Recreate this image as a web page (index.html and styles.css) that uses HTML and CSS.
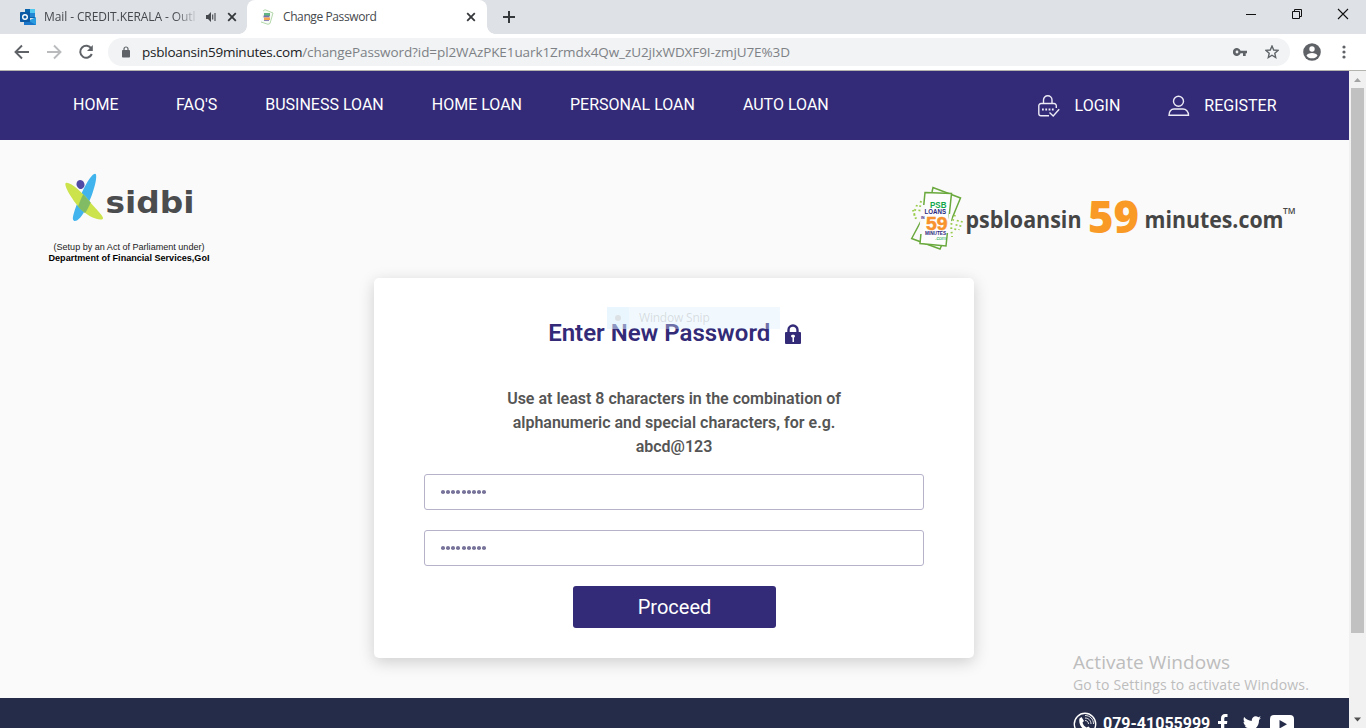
FILE: index.html
```html
<!DOCTYPE html>
<html lang="en">
<head>
<meta charset="utf-8">
<title>Change Password</title>
<link rel="stylesheet" href="styles.css">
</head>
<body>
<div class="browser">
  <div class="tabstrip">
    <div class="tab tab-mail">
      <svg class="favicon" width="16" height="16" viewBox="0 0 16 16"><path d="M5 0h10v9H5z" fill="#0a64ad"/><path d="M10 0h5v4h-5z" fill="#50c8f0"/><path d="M5 4h5v4H5z" fill="#1d4f91"/><path d="M10 4h5v4h-5z" fill="#2386d2"/><path d="M4 8l6 3 6-3v8H4z" fill="#2b9be0"/><path d="M4 9l12 7H4z" fill="#1976c8"/><rect y="3" width="10" height="10" rx=".7" fill="#0c59a4"/><circle cx="5" cy="8" r="2.3" fill="none" stroke="#fff" stroke-width="1.4"/></svg>
      <span class="tab-title mail-title">Mail - CREDIT.KERALA - Outl</span>
      <svg class="speaker" width="11" height="10" viewBox="0 0 11 10"><path d="M0 3h2l3-3v10L2 7H0z" fill="#45494d"/><path d="M6.700 2.500v5M9 1v8" stroke="#45494d" stroke-width="1.1"/></svg>
      <svg class="close" width="10" height="10" viewBox="0 0 10 10"><path d="M1.200 1.200l7.600 7.600M8.800 1.200l-7.600 7.600"/></svg>
    </div>
    <div class="tab tab-active">
      <svg class="favicon" width="16" height="16" viewBox="0 0 16 16"><path d="M4 2l2-1.300L14 4l-3 10.500-2 .8L2 13" fill="#f7fbf5" stroke="#b4d9ab"/><path d="M5 4h6v3H5z" fill="#60b580"/><path d="M4.500 6.500h6v2h-6z" fill="#7771b0"/><path d="M5 8.500h6V11H5z" fill="#f6a64e"/><path d="M5 11h5v1H5z" fill="#8a84b8"/></svg>
      <span class="tab-title page-title">Change Password</span>
      <svg class="close" width="10" height="10" viewBox="0 0 10 10"><path d="M1.200 1.200l7.600 7.600M8.800 1.200l-7.600 7.600"/></svg>
    </div>
    <svg class="newtab" width="12" height="12" viewBox="0 0 12 12"><path d="M6 0v12M0 6h12" stroke="#35383b" stroke-width="2"/></svg>
    <div class="window-controls">
      <svg width="10" height="12" viewBox="0 0 10 12"><path d="M0 6.500h10" stroke="#111"/></svg>
      <svg width="11" height="12" viewBox="0 0 11 12" fill="none" stroke="#111"><path d="M1.500 3.500h7v7h-7zM3.500 3.500v-2h7v7h-2"/></svg>
      <svg width="12" height="12" viewBox="0 0 12 12" stroke="#111" stroke-width="1.100"><path d="M1 1l10 10M11 1L1 11"/></svg>
    </div>
  </div>

  <div class="toolbar">
    <div class="nav-buttons">
      <svg width="16" height="16" viewBox="0 0 16 16" fill="none" stroke="#5f6368" stroke-width="1.900"><path d="M15 8H2M8 1.500L1.500 8 8 14.500"/></svg>
      <svg width="16" height="16" viewBox="0 0 16 16" fill="none" stroke="#b9bbbd" stroke-width="1.900"><path d="M1 8h13M8 1.500L14.500 8 8 14.500"/></svg>
      <svg width="16" height="16" viewBox="0 0 16 16" fill="none" stroke="#5f6368" stroke-width="2"><path d="M13.300 4.500A6 6 0 1 0 13.800 10"/><path d="M14.800 1v6H9z" fill="#5f6368" stroke="none"/></svg>
    </div>
    <div class="omnibox">
      <svg class="site-lock" width="8" height="12" viewBox="0 0 8 12"><path d="M2 5V3a2 2 0 0 1 4 0v2" fill="none" stroke="#5f6368" stroke-width="1.200"/><rect y="4" width="8" height="7.500" rx=".8" fill="#5f6368"/></svg>
      <span class="url"><span class="host">psbloansin59minutes.com</span><span class="path">/changePassword?id=pl2WAzPKE1uark1Zrmdx4Qw_zU2jIxWDXF9I-zmjU7E%3D</span></span>
      <svg class="key" width="14" height="8" viewBox="0 0 14 8"><path fill="#5f6368" fill-rule="evenodd" d="M7.600 2.700A4 4 0 1 0 7.600 5.300H10V8h2.700V5.300H14V2.700zM4 5.400a1.400 1.400 0 1 1 0-2.800 1.400 1.400 0 0 1 0 2.800z"/></svg>
      <svg class="star" width="14" height="14" viewBox="0 0 14 14"><path d="M7 1l1.700 4 4.300.4-3.200 2.900.9 4.200L7 10.200l-3.700 2.300.9-4.200L1 5.400 5.300 5z" fill="none" stroke="#5f6368" stroke-width="1.400"/></svg>
    </div>
    <svg class="profile" width="18" height="18" viewBox="0 0 18 18"><circle cx="9" cy="9" r="8.800" fill="#5f6368"/><circle cx="9" cy="6" r="2.700" fill="#fff"/><path d="M3.500 12.500c1-3.500 10-3.500 11 0-2 3.800-9 3.800-11 0z" fill="#fff"/></svg>
    <svg class="dots" width="4" height="14" viewBox="0 0 4 14" fill="#5f6368"><circle cx="2" cy="2" r="1.600"/><circle cx="2" cy="7" r="1.600"/><circle cx="2" cy="12" r="1.600"/></svg>
  </div>

  <div class="viewport">
    <div class="page">
      <nav class="site-nav">
        <div class="links">
          <a class="home">HOME</a><a>FAQ'S</a><a>BUSINESS LOAN</a><a>HOME LOAN</a><a>PERSONAL LOAN</a><a>AUTO LOAN</a>
        </div>
        <div class="account">
          <svg width="22" height="22" viewBox="0 0 22 22" fill="none" stroke="#eceaf5" stroke-width="1.400"><path d="M5.500 8.500V5a4 4 0 0 1 8.500 0v3.500M18.300 13v-2.300a2.200 2.200 0 0 0-2.200-2.200H3A2.200 2.200 0 0 0 .8 10.700v7.800A2.200 2.200 0 0 0 3 20.700h8M11.500 17.500l3.700 3.500 6-6.800"/><path d="M4 14.500h12" stroke-width="1.800" stroke-dasharray="1.800 1.500"/></svg>
          <a class="login">LOGIN</a>
          <svg width="22" height="22" viewBox="0 0 22 22" fill="none" stroke="#eceaf5" stroke-width="1.400"><circle cx="10.500" cy="6.200" r="5"/><path d="M1 20.300c0-3.800 2-6.300 5-6.300h9c3 0 5.500 2.500 5.500 6.300z"/></svg>
          <a>REGISTER</a>
        </div>
      </nav>

      <header class="brands">
        <svg class="sidbi" width="170" height="98" viewBox="0 0 170 98">
          <path d="M51 4.500C52.500 10 46 31 38.500 43c-4 7-9 10-10.500 6.500C27 44 38 18 44 9.500c2.500-3.500 6-7.500 7-5z" fill="#41b4ee"/>
          <path d="M20.800 13c4-1.500 15 8 23 17.500 7 8.500 16 16.500 14 18.500-4 2.500-17-3.500-24.500-12.500-6-7-15-21.500-12.500-23.500z" fill="#cce34b"/>
          <path d="M38.200 24.200l7.500 8.300c-1.900 4.200-3.500 7.500-5.700 10.500-2.700-1.800-5-4.200-7-6.800 1.500-4 3.200-8 5.200-12z" fill="#81bc65"/>
          <ellipse cx="35.500" cy="14.500" rx="4" ry="4.500" transform="rotate(-20 35.500 14.500)" fill="#504aa5"/>
          <text x="60.500" y="42.500" class="sidbi-name" textLength="89" lengthAdjust="spacingAndGlyphs">sidbi</text>
          <text x="8.500" y="80" class="sidbi-note" textLength="151" lengthAdjust="spacingAndGlyphs">(Setup by an Act of Parliament under)</text>
          <text x="3.500" y="91" class="sidbi-note strong" textLength="161" lengthAdjust="spacingAndGlyphs">Department of Financial Services,GoI</text>
        </svg>
        <svg class="psb" width="390" height="70" viewBox="0 0 390 70">
          <g fill="none" stroke="#6aa93d" stroke-width="1.500">
            <path d="M11 36L1.700 53.500 30 64l1.500-3.500"/><path d="M22 7l1-4.500L50.500 13 41 36"/>
          </g>
          <path d="M15 7.500l26.500 1-5.500 52.500-26-2.500z" fill="#fdfdfd" stroke="#6aa93d" stroke-width="1.500"/>
          <path d="M11.500 20h4l-3 29h-3.500zM39 29h3l-2.500 19h-4z" fill="#fafafa"/>
          <g stroke="#99cc4b" stroke-width="2" stroke-dasharray="1.600 2.800" fill="none"><path d="M11 16l-2 12M7 20l-3 8 2 6M3 25l2 7M45 30l-4 10 1 12M48 35l-3 10M52 36l-3 9"/></g>
          <text x="20" y="23.200" class="mark green" font-size="8.500" textLength="16.500" lengthAdjust="spacingAndGlyphs">PSB</text>
          <text x="14.500" y="29.200" class="mark navy" font-size="6.500" textLength="21.500" lengthAdjust="spacingAndGlyphs">LOANS</text>
          <text x="11" y="33.500" class="mark navy" font-size="3.500">IN</text>
          <text x="16" y="45" class="mark orange" font-size="17.500" textLength="21.500" lengthAdjust="spacingAndGlyphs">59</text>
          <text x="15" y="49.500" class="mark navy" font-size="4.800" textLength="21" lengthAdjust="spacingAndGlyphs">MINUTES</text>
          <text x="25" y="54.500" class="mark light green" font-size="6" textLength="11" lengthAdjust="spacingAndGlyphs">.com</text>
          <text x="55.500" y="43" class="wordmark" textLength="116" lengthAdjust="spacingAndGlyphs">psbloansin</text>
          <text x="178" y="47.500" class="wordmark-num" textLength="51" lengthAdjust="spacingAndGlyphs">59</text>
          <text x="234.500" y="43" class="wordmark" textLength="139" lengthAdjust="spacingAndGlyphs">minutes.com</text>
          <text x="373" y="29" class="trademark" textLength="12.500" lengthAdjust="spacingAndGlyphs">TM</text>
        </svg>
      </header>

      <main class="card">
        <div class="snip-ghost"><span class="snip-icon"><i></i></span><span class="snip-label">Window Snip</span></div>
        <h1>Enter New Password
          <svg width="16" height="20" viewBox="0 0 16 20"><path d="M3.500 10V6a4.500 4.500 0 0 1 9 0v4" fill="none" stroke="#332a78" stroke-width="2.400"/><rect y="8" width="16" height="12" rx="1" fill="#332a78"/><path d="M6 12c0-1.600 4-1.600 4 0 0 1-1 1.500-1 1.500V18H7.500v-4.500S6 13 6 12z" fill="#fff"/></svg>
        </h1>
        <p class="hint">Use at least 8 characters in the combination of<br>alphanumeric and special characters, for e.g.<br>abcd@123</p>
        <div class="field"><i></i><i></i><i></i><i></i><i></i><i></i><i></i><i></i><i></i></div>
        <div class="field"><i></i><i></i><i></i><i></i><i></i><i></i><i></i><i></i><i></i></div>
        <button class="proceed">Proceed</button>
      </main>

      <footer class="site-footer">
        <svg class="phone" width="24" height="24" viewBox="0 0 24 24" fill="none" stroke="#fff"><circle cx="12" cy="12" r="10.700" stroke-width="1.400"/><path d="M6.500 6.500l2-1.500 2.500 4-1.500 1.500c.5 2 2 4 4 5l2-1 3 3c-4 5-14-3-12-11z" fill="#fff" stroke="none"/><path d="M12 8.500c2 0 3.500 1.500 3.500 3.500M12 6c3.500 0 6 2.500 6 6M12 3.500c5 0 8.500 3.500 8.500 8.500" stroke-width=".9"/></svg>
        <span class="tel">079-41055999</span>
        <svg class="fb" width="10" height="18" viewBox="0 0 10 18"><path d="M3 18v-8H0V7h3V4.500C3 1.500 4.500 0 7 0h2.500v3H8C6.600 3 6.300 3.500 6.300 4.800V7h3L9 10H6.300v8z" fill="#fff"/></svg>
        <svg class="tw" width="18" height="16" viewBox="0 0 18 16"><path d="M18 2l-2 2c.3 8-8 14-16 9.500 2 0 4-.4 5-1.500-1.700-.2-2.800-1-3.300-2.500h1.500C1.500 9 .5 7.500.5 5.700l1.500.5C.5 5 .2 2.800 1.200 1 3.300 3.500 5.700 4.700 8.800 5 8.200 1 12.500-1.300 15.300 1.200L17.700.3 16.200 2.400z" fill="#fff"/></svg>
        <svg class="yt" width="24" height="18" viewBox="0 0 24 18"><path fill="#fff" fill-rule="evenodd" d="M4 0h16q4 0 4 4v10q0 4-4 4H4q-4 0-4-4V4q0-4 4-4zM9.500 5v8.500L17 9.200z"/></svg>
      </footer>

      <div class="watermark"><div class="wm-title">Activate Windows</div><div class="wm-text">Go to Settings to activate Windows.</div></div>
    </div>
    <div class="scrollbar">
      <svg width="17" height="17" viewBox="0 0 17 17"><path d="M5 11l3.500-4 3.500 4z" fill="#a3a3a3"/></svg>
      <div class="thumb"></div>
      <svg width="17" height="17" viewBox="0 0 17 17"><path d="M5 6.500h7l-3.500 4z" fill="#505050"/></svg>
    </div>
  </div>
</div>
</body>
</html>
```

FILE: styles.css
```css
* { box-sizing: border-box; }
body { margin: 0; font-family: Roboto, sans-serif; }
svg { display: block; flex: none; }
.browser { width: 1366px; height: 728px; display: flex; flex-direction: column; overflow: hidden; background: #fff; }

.tabstrip { height: 34px; flex: none; display: flex; background: #dee1e6; }
.tab { display: flex; align-items: center; height: 34px; }
.tab-mail { width: 247px; padding: 0 10px 0 20px; background: #dee1e6; }
.tab-active { position: relative; width: 240px; padding: 0 11px 0 12px; background: #fff; border-radius: 8px 8px 0 0; }
.tab-active::before, .tab-active::after { content: ""; position: absolute; bottom: 0; width: 8px; height: 8px; }
.tab-active::before { left: -8px; background: radial-gradient(circle at 0 0, transparent 7.5px, #fff 8px); }
.tab-active::after { right: -8px; background: radial-gradient(circle at 100% 0, transparent 7.5px, #fff 8px); }
.tab-title { font: 12px/16px "Open Sans", sans-serif; color: #45494d; white-space: nowrap; overflow: hidden; }
.mail-title { width: 153px; margin-left: 8px; letter-spacing: -.1px; -webkit-mask-image: linear-gradient(to right, #000 130px, transparent 155px); mask-image: linear-gradient(to right, #000 130px, transparent 155px); }
.page-title { flex: 1; margin-left: 8px; letter-spacing: -.4px; }
.speaker { margin-left: 10px; }
.tab-mail .close { margin-left: 10px; }
.close path { stroke: #35383b; stroke-width: 1.8; }
.newtab { margin: 11px 0 0 16px; }
.window-controls { margin-left: auto; display: flex; gap: 35px; padding: 8px 17px 0 0; }

.toolbar { height: 36px; flex: none; display: flex; align-items: center; padding: 0 20px 0 14px; background: #fff; }
.nav-buttons { display: flex; gap: 16px; }
.omnibox { width: 1182px; height: 28px; margin-left: 14px; padding: 0 11px 0 14px; display: flex; align-items: center; background: #f1f3f4; border-radius: 14px; }
.url { flex: 1; margin-left: 12px; font: 13.5px/18px "Open Sans", sans-serif; white-space: nowrap; }
.host { color: #202124; letter-spacing: -.24px; }
.path { color: #7d8186; letter-spacing: -.09px; }
.key { margin-right: 18px; }
.profile { margin-left: 13px; }
.dots { margin-left: auto; }

.viewport { height: 658px; flex: none; display: flex; border-top: 1px solid #b4b3ae; }
.page { position: relative; width: 1349px; height: 657px; display: flex; flex-direction: column; background: #fafafa; overflow: hidden; }
.site-nav { height: 69px; flex: none; display: flex; justify-content: space-between; padding: 0 72.5px 0 73px; background: #332a78; color: #fff; font-size: 16px; }
.links { display: flex; align-items: center; gap: 48px; padding-bottom: 3px; }
.home { margin-right: 9.6px; }
.account { display: flex; align-items: center; gap: 14.5px; }
.login { margin-right: 33px; }

.brands { height: 138px; flex: none; display: flex; justify-content: space-between; padding: 30px 49px 0 45px; }
.psb { margin-top: 15px; }
.sidbi-name { font: bold 31px "DejaVu Sans", sans-serif; fill: #4b4c4e; }
.sidbi-note { font: 9px "Liberation Sans", sans-serif; fill: #222; }
.strong { font-weight: bold; fill: #000; }
.mark { font-family: "Liberation Sans", sans-serif; font-weight: bold; }
.light { font-weight: normal; }
.green { fill: #13a84b; }
.navy { fill: #29277c; }
.orange { fill: #f7922c; stroke: #f7922c; stroke-width: .5px; }
.wordmark { font: bold 23.5px "Open Sans", sans-serif; fill: #454545; }
.wordmark-num { font: 800 44px "Open Sans", sans-serif; fill: #f99a27; }
.trademark { font: 600 9.5px "Open Sans", sans-serif; fill: #454545; }

.card { position: relative; width: 600px; height: 380px; flex: none; margin-left: 374px; display: flex; flex-direction: column; align-items: center; padding-top: 39px; background: #fff; border-radius: 5px; box-shadow: 0 4px 16px rgba(0,0,0,.18); }
.snip-ghost { position: absolute; z-index: 1; left: 233px; top: 29px; width: 173px; height: 22px; display: flex; align-items: center; background: rgba(215,238,252,.36); font: 12px/16px "Open Sans", sans-serif; letter-spacing: -.2px; color: rgba(130,130,130,.25); }
.snip-icon { width: 22px; height: 22px; display: flex; align-items: center; justify-content: center; background: rgba(215,238,252,.3); }
.snip-icon i { width: 6px; height: 6px; border-radius: 50%; background: #dce1e5; }
.snip-label { margin-left: 10px; }
h1 { margin: 0 0 0 1px; height: 32px; display: flex; align-items: center; gap: 14.5px; font-size: 24px; line-height: 32px; font-weight: 600; color: #332a78; }
h1 svg { margin-top: 2px; }
.hint { margin: 38px 0 15px; text-align: center; font-size: 16px; line-height: 24px; font-weight: 600; color: #555; }
.field { width: 500px; height: 36px; flex: none; margin-bottom: 20px; padding: 15px 16px; display: flex; gap: 1px; border: 1px solid #b5b2ca; border-radius: 3px; }
.field i { width: 4px; height: 3.5px; margin-right: .13px; border-radius: 50%; background: #77739a; }
.proceed { width: 203px; height: 42px; flex: none; margin-left: 1px; padding: 0; border: 0; border-radius: 3px; background: #332a78; color: #fff; font: 20px Roboto, sans-serif; }

.site-footer { height: 50px; flex: none; margin-top: 40px; padding: 14px 0 0 1073px; display: flex; background: #252c49; color: #fff; }
.tel { margin-left: 6px; font-size: 16px; line-height: 24px; font-weight: 700; }
.fb { margin: 2px 0 0 8px; }
.tw { margin: 4px 0 0 15px; }
.yt { margin: 3px 0 0 9px; }
.watermark { position: absolute; left: 1073px; top: 578px; font-family: "Open Sans", sans-serif; color: #bdbdbd; white-space: nowrap; }
.wm-title { font-size: 19px; line-height: 26px; letter-spacing: .08px; }
.wm-text { font-size: 14px; line-height: 20px; letter-spacing: .19px; }
.scrollbar { width: 17px; height: 657px; background: #f1f1f1; }
.thumb { width: 13px; height: 545px; margin: 0 2px 78px; background: #c1c1c1; }
```
